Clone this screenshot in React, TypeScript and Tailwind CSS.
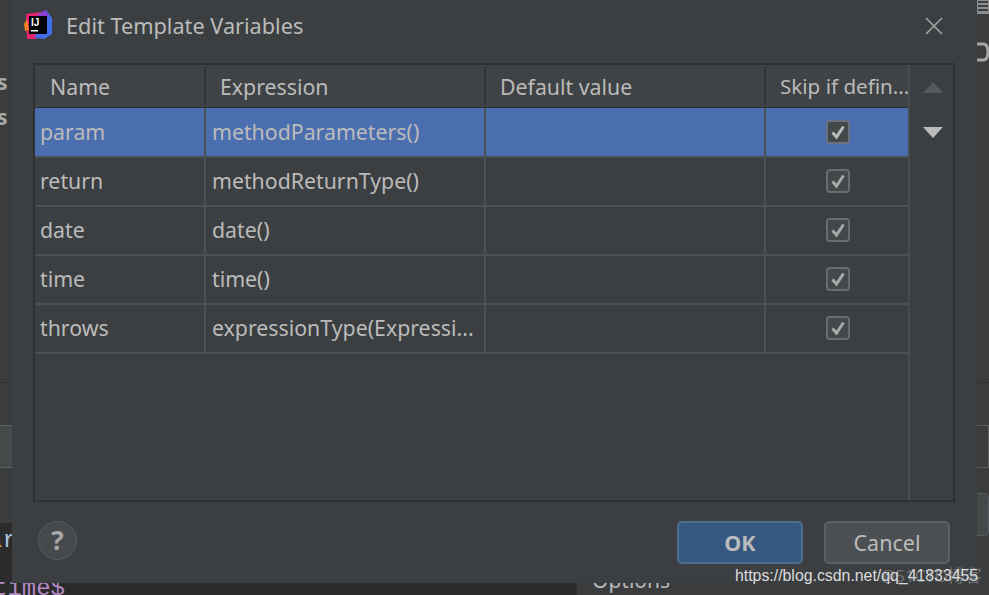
import React from 'react';

const rows = [
    {name: 'param', expr: 'methodParameters()'},
    {name: 'return', expr: 'methodReturnType()'},
    {name: 'date', expr: 'date()'},
    {name: 'time', expr: 'time()'},
    {name: 'throws', expr: 'expressionType(Expressi...'},
];

const IdeaLogo = () => (
    <svg width="30" height="30" viewBox="0 0 30 30" className="shrink-0">
        <path d="M3 4 L18 2 L14 29 L4 29 Z" fill="#e8246f"/>
        <path d="M4 9 L1 14 L2 21 L6 20 Z" fill="#f5821f"/>
        <path d="M18 3 L23 0 L29 8 L29 24 L21 29 L12 28 Z" fill="#3f6fe8"/>
        <path d="M15 4 L23 0 L26 7 L15 7 Z" fill="#8a3fd1"/>
        <rect x="6" y="6" width="18" height="18" fill="#000"/>
        <rect x="8" y="20" width="7" height="1.5" fill="#fff"/>
        <text x="8" y="16" fill="#fff" fontSize="10" fontWeight="700" fontFamily="'Liberation Sans', sans-serif">IJ</text>
    </svg>
);

const Check = ({selected}: {selected: boolean}) => (
    <svg width="24" height="24" viewBox="0 0 24 24">
        <rect x="1" y="1" width="22" height="22" rx="3" fill="#43494a" stroke={selected ? "#6b7280" : "#6b6b6b"} strokeWidth="2"/>
        <path d="M6.5 12.5 L10.5 17 L17.5 6.5" fill="none" stroke={selected ? "#bbbbbb" : "#a9a9a9"} strokeWidth="3"/>
    </svg>
);

const App = () => {
    return (
        <div className="relative w-[989px] h-[595px] overflow-hidden flex bg-[#3a3c3e] font-['Noto_Sans',sans-serif]">
            {/* ide window behind the dialog */}
            <div className="w-[577px] flex flex-col border-r border-[#2f3133]">
                <div className="h-[523px] overflow-hidden">
                    <div className="-ml-[3px] pt-[65px] text-[21px] leading-[35px] font-bold text-[#a9a9a9]">
                        <div>s</div>
                        <div>s</div>
                    </div>
                    <div className="mt-[247px] h-[1px] bg-[#2f3133]"></div>
                    <div className="mt-[42px] h-[43px] bg-[#45494a] border-y border-[#5e6060]"></div>
                </div>
                <div className="h-[72px] bg-[#2b2b2b] overflow-hidden font-['Liberation_Mono',monospace] text-[24px] leading-[48px] whitespace-nowrap">
                    <div className="-mt-[6px] -ml-[12px]"><span className="text-[#cc9a4d]">a</span><span className="text-[#a9c7e0]">r</span></div>
                    <div className="-ml-[7px] text-[#b389c5]">time$</div>
                </div>
            </div>
            <div className="flex-1 flex flex-col">
                <div className="h-[568px] flex flex-col items-end">
                    <div className="w-[12px] h-[14px] bg-[#8c8e8f] flex flex-col gap-[2px] px-[1px] pt-[1px]">
                        <div className="h-[2px] bg-[#3c3f41]"></div>
                        <div className="h-[2px] bg-[#3c3f41]"></div>
                        <div className="h-[2px] bg-[#3c3f41]"></div>
                    </div>
                    <svg width="12" height="20" viewBox="0 0 12 20" className="mt-[28px]">
                        <path d="M0 2 L6 2 Q11 2 11 10 Q11 18 6 18 L0 18" fill="none" stroke="#a5a5a5" strokeWidth="3"/>
                    </svg>
                    <div className="mt-[320px] w-[12px] h-[1px] bg-[#2f3133]"></div>
                    <div className="mt-[42px] w-[12px] h-[43px] border-y border-r border-[#5e6060]"></div>
                    <div className="mt-[25px] w-[12px] h-[43px] bg-[#45494a] border-y border-r border-[#5a5d5f] rounded-r-[5px]"></div>
                </div>
                <div className="pl-[15px] text-[21px] leading-[30px] text-[#bbbbbb]">Options</div>
            </div>

            {/* dialog */}
            <div className="absolute left-[12px] top-0 w-[965px] h-[583px] bg-[#3c3f41] flex flex-col text-[#bbbbbb]">
                <div className="h-[63px] flex items-start pl-[11px] pr-[33px] pt-[10px]">
                    <IdeaLogo/>
                    <div className="ml-[13px] text-[21.7px] leading-[32px] text-[#bbbbbb]">Edit Template Variables</div>
                    <svg width="20" height="20" viewBox="0 0 20 20" className="ml-auto mt-[6px]">
                        <path d="M2 2 L18 18 M18 2 L2 18" stroke="#a5a5a5" strokeWidth="1.6" fill="none"/>
                    </svg>
                </div>

                <div className="ml-[21px] w-[922px] h-[439px] border-2 border-[#2e3032] flex bg-[#3c3f41]">
                    <div className="w-[875px] flex flex-col border-r-2 border-[#4a4d4f]">
                        <div className="h-[43px] grid grid-cols-[171px_280px_280px_142px] bg-[#3f4345] border-b border-[#2b2d2e] text-[21.3px] text-[#bbbbbb]">
                            <div className="pl-[15px] my-[2px] leading-[39px] border-r-2 border-[#323436]">Name</div>
                            <div className="pl-[14px] my-[2px] leading-[39px] border-r-2 border-[#323436]">Expression</div>
                            <div className="pl-[14px] my-[2px] leading-[39px] border-r-2 border-[#323436]">Default value</div>
                            <div className="pl-[14px] my-[2px] leading-[39px] text-[20.6px] whitespace-nowrap overflow-hidden">Skip if defin...</div>
                        </div>
                        {rows.map((row, index) => {
                            const selected = index === 0;
                            return (
                                <div key={index} className={selected
                                    ? "h-[49px] grid grid-cols-[171px_280px_280px_142px] bg-[#4b6eaf] text-[21.3px] text-[#bbbbbb]"
                                    : "h-[49px] grid grid-cols-[171px_280px_280px_142px] text-[21.3px] text-[#bbbbbb]"}>
                                    <div className="pl-[5px] leading-[48px] border-r-2 border-b-2 border-[#4d5153]">{row.name}</div>
                                    <div className="pl-[6px] leading-[48px] border-r-2 border-b-2 border-[#4d5153] whitespace-nowrap overflow-hidden">{row.expr}</div>
                                    <div className="border-r-2 border-b-2 border-[#4d5153]"></div>
                                    <div className="border-b-2 border-[#4d5153] flex items-center justify-center pl-[2px]">
                                        <Check selected={selected}/>
                                    </div>
                                </div>
                            );
                        })}
                    </div>
                    <div className="flex-1 flex flex-col items-center pl-[2px] pt-[17px] gap-[34px]">
                        <div className="w-0 h-0 border-l-[10px] border-r-[10px] border-b-[11px] border-l-transparent border-r-transparent border-b-[#565a5c]"></div>
                        <div className="w-0 h-0 border-l-[10px] border-r-[10px] border-t-[11px] border-l-transparent border-r-transparent border-t-[#bbbbbb]"></div>
                    </div>
                </div>

                <div className="flex-1 flex items-start pl-[26px] pr-[27px] pt-[19px]">
                    <div className="w-[39px] h-[39px] rounded-full bg-[#46494b] border-[1px] border-[#5a5d5f] flex items-center justify-center text-[26px] font-bold text-[#a9a9a9]">?</div>
                    <button className="ml-auto w-[126px] h-[43px] pt-[1px] rounded-[5px] bg-[#365880] border-2 border-[#4c708c] text-[21.5px] font-bold text-[#bbbbbb]">OK</button>
                    <button className="ml-[21px] w-[126px] h-[43px] pt-[1px] rounded-[5px] bg-[#4c5052] border-2 border-[#5e6060] text-[21.5px] text-[#bbbbbb]">Cancel</button>
                </div>
            </div>

            {/* blog watermarks */}
            <div className="absolute left-[880px] top-[565px] text-[17px] leading-[22px] font-['Noto_Sans','Noto_Sans_CJK_SC',sans-serif] text-[#6f7274] whitespace-nowrap">@51CTO博客</div>
            <div className="absolute left-[735px] top-[565px] text-[15.85px] leading-[22px] font-['Liberation_Sans',sans-serif] text-[#dcdcdc] whitespace-nowrap">https://blog.csdn.net/qq_41833455</div>
        </div>
    );
};

export default App;
